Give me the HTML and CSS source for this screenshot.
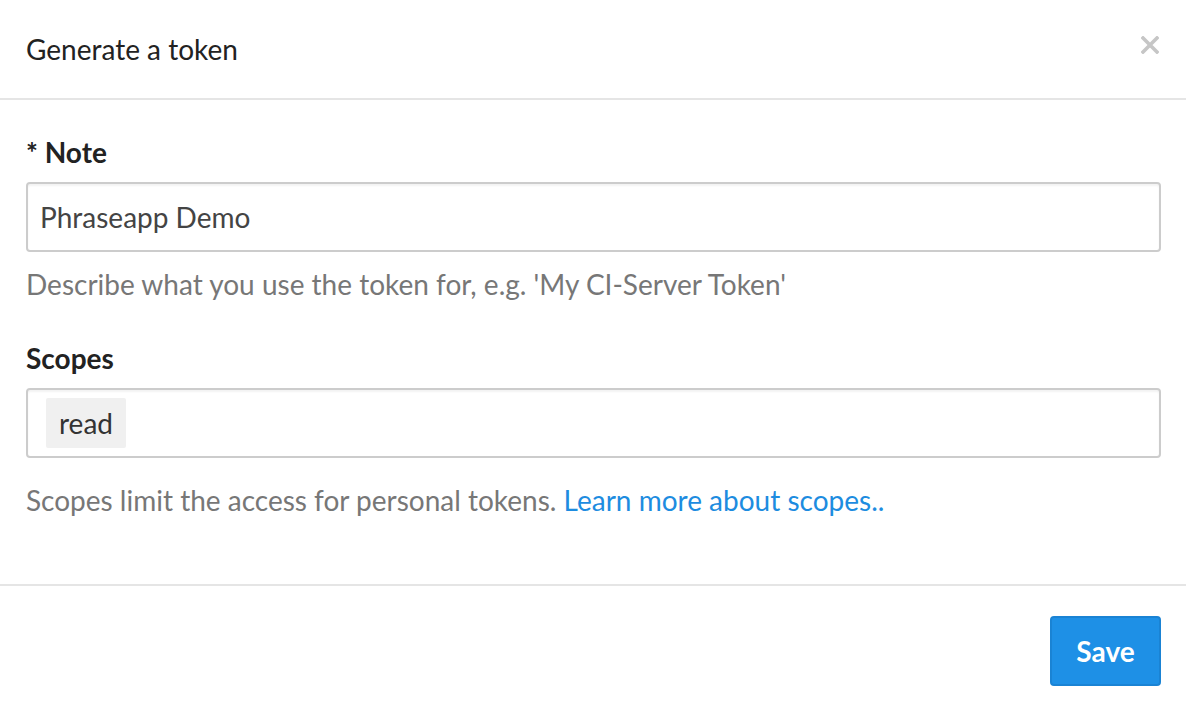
FILE: index.html
```html
<!DOCTYPE html>
<html>
<head>
<meta charset="utf-8">
<link rel="stylesheet" href="styles.css">
</head>
<body>
<div class="modal">
  <div class="modal-header">
    <h4 class="title">Generate a token</h4>
    <button class="close" aria-label="Close">
      <svg width="18" height="18" viewBox="0 0 18 18"><path d="M2 2 L16 16 M16 2 L2 16" stroke="#c6c6c6" stroke-width="3.6" stroke-linecap="square"/></svg>
    </button>
  </div>
  <div class="modal-body">
    <div class="field field-note">
      <label class="label">* Note</label>
      <div class="input">Phraseapp Demo</div>
      <p class="help">Describe what you use the token for, e.g. 'My CI-Server Token'</p>
    </div>
    <div class="field">
      <label class="label">Scopes</label>
      <div class="input tags"><span class="tag">read</span></div>
      <p class="help help-scopes">Scopes limit the access for personal tokens. <a href="#" class="link">Learn more about scopes..</a></p>
    </div>
  </div>
  <div class="modal-footer">
    <button class="btn">Save</button>
  </div>
</div>
</body>
</html>
```

FILE: styles.css
```css
html, body {
  margin: 0;
  padding: 0;
  background: #fff;
}
body {
  font-family: Lato, "Open Sans", sans-serif;
  font-size: 28px;
  color: #333;
}
.modal {
  width: 1186px;
  height: 704px;
  display: flex;
  flex-direction: column;
}
.modal-header {
  height: 98px;
  border-bottom: 2px solid #e5e5e5;
  display: flex;
  align-items: center;
  justify-content: space-between;
  padding: 0 26px;
  box-sizing: content-box;
}
.title {
  margin: 0;
  font-size: 28px;
  font-weight: 400;
  color: #222;
  line-height: 1;
}
.close {
  border: 0;
  background: none;
  padding: 0;
  width: 18px;
  height: 18px;
  margin-right: 1px;
  margin-top: -9px;
  cursor: pointer;
  display: block;
}
.close svg {
  display: block;
}
.modal-body {
  padding: 32px 25px 0 26px;
  height: 486px;
  box-sizing: border-box;
  border-bottom: 2px solid #e5e5e5;
}
.field-note {
  margin-bottom: 36px;
}
.label {
  display: block;
  font-weight: 700;
  color: #222;
  line-height: 40px;
  margin-bottom: 10px;
}
.input {
  height: 70px;
  box-sizing: border-box;
  border: 2px solid #ccc;
  border-radius: 4px;
  box-shadow: inset 0 2px 2px rgba(0,0,0,0.05);
  padding: 0 12px;
  display: flex;
  align-items: center;
  color: #444;
}
.tags {
  padding: 0 18px;
}
.tag {
  background: #f0f0f0;
  border-radius: 2px;
  height: 50px;
  width: 80px;
  display: flex;
  align-items: center;
  justify-content: center;
  color: #333;
}
.help {
  margin: 14px 0 0;
  color: #777;
  line-height: 36px;
}
.help-scopes {
  margin-top: 24px;
}
.link {
  color: #1d8ce0;
  text-decoration: none;
}
.modal-footer {
  flex: 1;
  display: flex;
  justify-content: flex-end;
  align-items: flex-start;
  padding: 30px 25px 0;
}
.btn {
  width: 111px;
  height: 70px;
  background: #1e90e6;
  border: 2px solid #1a83d4;
  border-radius: 4px;
  color: #fff;
  font-family: Lato, "Open Sans", sans-serif;
  font-size: 28px;
  font-weight: 700;
  padding: 0;
  cursor: pointer;
}
```
